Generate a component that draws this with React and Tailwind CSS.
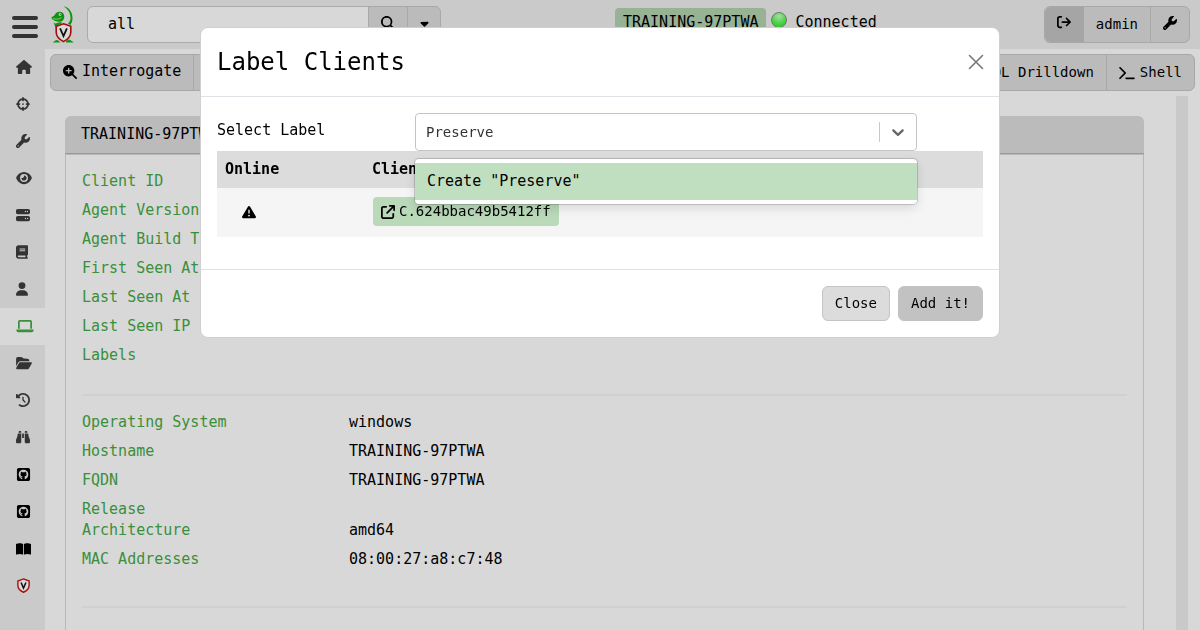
import { useState } from 'react'
import {
    FaBinoculars,
    FaBook,
    FaBookOpen,
    FaCaretDown,
    FaClockRotateLeft,
    FaCrosshairs,
    FaEye,
    FaFolderOpen,
    FaHouse,
    FaLaptop,
    FaMagnifyingGlass,
    FaMagnifyingGlassPlus,
    FaServer,
    FaSquareGithub,
    FaTriangleExclamation,
    FaUser,
    FaWrench,
    FaArrowRightFromBracket,
    FaArrowUpRightFromSquare,
    FaTerminal,
} from 'react-icons/fa6'

const NAV = [
    { name: 'Home', icon: FaHouse, size: 'w-4 h-[14px]' },
    { name: 'Hunt Manager', icon: FaCrosshairs, size: 'w-[14px] h-[14px]' },
    { name: 'View Artifacts', icon: FaWrench, size: 'w-[14px] h-[14px]' },
    { name: 'Server Events', icon: FaEye, size: 'w-4 h-[14px]' },
    { name: 'Server Artifacts', icon: FaServer, size: 'w-[14px] h-[14px]' },
    { name: 'Notebooks', icon: FaBook, size: 'w-3 h-[14px]' },
    { name: 'Users', icon: FaUser, size: 'w-3 h-[14px]' },
    { name: 'Host Information', icon: FaLaptop, size: 'w-[18px] h-[14px]', active: true },
    { name: 'Virtual Filesystem', icon: FaFolderOpen, size: 'w-4 h-[14px]' },
    { name: 'Collected Artifacts', icon: FaClockRotateLeft, size: 'w-[14px] h-[14px]' },
    { name: 'Client Events', icon: FaBinoculars, size: 'w-[14px] h-[14px]' },
    { name: 'GitHub', icon: FaSquareGithub, size: 'w-[15px] h-[15px]', external: true },
    { name: 'GitHub Issues', icon: FaSquareGithub, size: 'w-[15px] h-[15px]', external: true },
    { name: 'Documentation', icon: FaBookOpen, size: 'w-[15px] h-[14px]', external: true },
    { name: 'Velociraptor', icon: Shield, size: 'w-[15px] h-[15px]', external: true },
]

const CLIENT_ROWS = [
    ['Client ID', ''],
    ['Agent Version', ''],
    ['Agent Build Time', ''],
    ['First Seen At', ''],
    ['Last Seen At', ''],
    ['Last Seen IP', ''],
    ['Labels', ''],
]

const SYSTEM_ROWS = [
    ['Operating System', 'windows'],
    ['Hostname', 'TRAINING-97PTWA'],
    ['FQDN', 'TRAINING-97PTWA'],
    ['Release', '', 'mb-0'],
    ['Architecture', 'amd64'],
    ['MAC Addresses', '08:00:27:a8:c7:48'],
]

function Shield({ className = '' }) {
    return (
        <svg viewBox="0 0 14 16" className={className} aria-hidden="true">
            <path
                d="M7 1 13 3.2V8c0 3.2-2.4 5.6-6 7.2C3.4 13.6 1 11.2 1 8V3.2Z"
                fill="#dadada"
                stroke="#a80f0f"
                strokeWidth="1.5"
            />
            <path d="m4.400 4.800 2.600 6 2.600-6" fill="none" stroke="#111" strokeWidth="1.600" />
        </svg>
    )
}

function Logo() {
    return (
        <svg viewBox="0 0 26 38" className="h-[38px] w-[26px] shrink-0" aria-label="Velociraptor" role="img">
            <g fill="#0b970b">
                {/* tail */}
                <path d="M13.500 0.600c5 0 9 5.400 9 11.400 0 3-.8 5.200-2.200 7l-2.300-1.300c2-2.200 2.700-4 2.500-6.700C20.200 6.500 17.500 2.400 13.500 .6Z" />
                {/* head and jaw */}
                <path d="M1.200 11.500c1-.8 2.800-1.200 3.600-2.700C5.800 6.600 7.500 5.600 10 5.700c2.800.2 4.300 2.200 4.300 4.800 0 2.800-1.500 5-4 5.200-3.600.3-7.500-1-9.100-4.200Z" />
                <path d="M3.500 16.800c2 1.200 3.500.3 5 -.3l3-.6v1.600l-4.500 2-1.500 2.200-.8-2.400Z" />
                {/* feet */}
                <path d="M3 36.500c1.200-1.600 2.600-2.300 4.500-2.600l3 2.600H3Zm13-1.600 3-1.400c1.600.8 3.200 1.400 4.700 3H16Z" />
            </g>
            <path d="M3 12.600c3 .9 6 .6 8.500-.8" fill="none" stroke="#cacaca" strokeWidth="0.700" />
            <circle cx="10" cy="8.500" r="1.300" fill="#eee" />
            <circle cx="10.200" cy="8.500" r="0.600" fill="#111" />
            <path
                d="M13.500 17.800 20.800 20.300v5.700c0 4.200-2.900 7.400-7.300 9.600-4.400-2.200-7.300-5.400-7.300-9.600v-5.700Z"
                fill="#d8d8d8"
                stroke="#a50d0d"
                strokeWidth="1.600"
            />
            <path d="m10.100 22.300 3.400 7.700 3.400-7.700" fill="none" stroke="#111" strokeWidth="1.800" />
        </svg>
    )
}

function Header() {
    const [query, setQuery] = useState('all')
    return (
        <header className="flex shrink-0 items-center bg-[#cacaca] py-[6px] pr-[10px] pl-3">
            <button type="button" aria-label="Menu" className="flex w-[26px] flex-col gap-[5px] pt-1">
                <span className="h-1 w-full rounded-full bg-[#333]" />
                <span className="h-1 w-full rounded-full bg-[#333]" />
                <span className="h-1 w-full rounded-full bg-[#333]" />
            </button>
            <a href="#home" className="-my-1 ml-3">
                <Logo />
            </a>
            <form className="ml-[11px] flex" onSubmit={(e) => e.preventDefault()}>
                <input
                    type="text"
                    aria-label="Search clients"
                    value={query}
                    onChange={(e) => setQuery(e.target.value)}
                    className="w-[282px] rounded-l-md border border-[#ababab] bg-[#d8d8d8] px-5 py-[7px] leading-[21px]"
                />
                <button
                    type="submit"
                    aria-label="Search"
                    className="-ml-px flex w-10 items-center justify-center border border-[#a8a8a8] bg-[#bbb] pb-[3px]"
                >
                    <FaMagnifyingGlass className="h-[14px] w-[14px]" />
                </button>
                <button
                    type="button"
                    aria-label="Search options"
                    className="-ml-px flex w-[34px] items-center justify-center rounded-r-md border border-[#a8a8a8] bg-[#bbb] pb-[3px]"
                >
                    <FaCaretDown className="h-[13px] w-[13px]" />
                </button>
            </form>
            <div className="ml-[174px] flex items-start gap-[5px] pb-1">
                <a href="#client" className="rounded bg-[#98b296] px-2 py-1 leading-[21px]">
                    TRAINING-97PTWA
                </a>
                <span className="mt-1 h-4 w-4 rounded-full border border-[#6d7a6d] bg-[radial-gradient(circle_at_50%_25%,#a8dca4,#35cf30_70%)]" />
                <span className="ml-[3px] py-1 leading-[21px]">Connected</span>
            </div>
            <div className="ml-auto flex rounded-md border border-[#a8a8a8] bg-[#bbb] text-sm">
                <button type="button" aria-label="Log out" className="flex w-[39px] justify-center rounded-l-md bg-[#a5a5a5] pt-2">
                    <FaArrowRightFromBracket className="h-[14px] w-[14px]" />
                </button>
                <button type="button" className="px-3 py-[7px] leading-[21px]">
                    admin
                </button>
                <button
                    type="button"
                    aria-label="Settings"
                    className="flex w-[39px] items-center justify-center border-l border-[#a8a8a8] pb-[3px]"
                >
                    <FaWrench className="h-[14px] w-[14px]" />
                </button>
            </div>
        </header>
    )
}

function Sidebar() {
    return (
        <nav className="flex w-[45px] shrink-0 flex-col bg-[#cacaca]">
            {NAV.map(({ name, icon: Icon, size, active, external }) => (
                <a
                    key={name}
                    href="#nav"
                    aria-label={name}
                    className={`flex h-[37px] shrink-0 items-center pl-4 ${
                        active ? 'bg-[#d8d8d8] pb-[2px] text-[#3a8f3a]' : external ? 'text-black' : 'pb-[2px] text-[#333]'
                    }`}
                >
                    <Icon className={size} />
                </a>
            ))}
        </nav>
    )
}

function Toolbar() {
    return (
        <div className="flex shrink-0 justify-between">
            <div className="flex divide-x divide-[#a8a8a8] rounded-l-md border border-[#a8a8a8] bg-[#bbb]">
                <button type="button" className="flex items-center gap-[5px] px-3 pt-[6px] pb-2 leading-[21px]">
                    <FaMagnifyingGlassPlus className="h-[14px] w-[14px]" />
                    Interrogate
                </button>
                <button type="button" aria-label="Virtual filesystem" className="px-3">
                    <FaFolderOpen className="h-[14px] w-4" />
                </button>
            </div>
            <div className="flex divide-x divide-[#a8a8a8] rounded-r-md border border-[#a8a8a8] bg-[#bbb] text-sm">
                <button type="button" className="px-3 py-[7px] leading-[21px]">
                    VQL Drilldown
                </button>
                <button type="button" className="flex items-center gap-[5px] px-3 py-[7px] leading-[21px]">
                    <FaTerminal className="h-[14px] w-4" />
                    Shell
                </button>
            </div>
        </div>
    )
}

function InfoList({ rows }) {
    return (
        <dl>
            {rows.map(([label, value, margin = 'mb-2']) => (
                <div key={label} className={`grid grid-cols-[267px_1fr] leading-[21px] ${margin}`}>
                    <dt className="text-[#3a8f3a]">{label}</dt>
                    <dd>{value}</dd>
                </div>
            ))}
        </dl>
    )
}

function ClientCard() {
    return (
        <section className="flex flex-1 flex-col">
            <h1 className="rounded-t-md border-b border-[#999] bg-[#bbb] px-4 py-2 leading-[21px]">
                TRAINING-97PTWA
            </h1>
            <div className="flex-1 border-x border-t border-[#b8b8b8] px-4 pt-4">
                <InfoList rows={CLIENT_ROWS} />
                <hr className="mt-7 mb-4 border-t-2 border-[#d0d0d0]" />
                <InfoList rows={SYSTEM_ROWS} />
                <hr className="mt-9 mb-4 border-t-2 border-[#d0d0d0]" />
            </div>
        </section>
    )
}

function LabelSelect() {
    const [value, setValue] = useState('Preserve')
    return (
        <div className="relative flex w-[502px] items-center rounded border border-[#c4c4c4] bg-white">
            <input
                id="label-select"
                type="text"
                role="combobox"
                aria-expanded="true"
                aria-controls="label-options"
                value={value}
                onChange={(e) => setValue(e.target.value)}
                className="min-w-0 flex-1 px-[10px] py-2 text-sm leading-5 text-[#333] outline-none"
            />
            <span className="h-5 w-px bg-[#c8c8c8]" />
            <button type="button" aria-label="Show labels" className="px-2">
                <svg viewBox="0 0 20 20" className="h-5 w-5 fill-[#666]" aria-hidden="true">
                    <path d="M4.516 7.548c0.436-0.446 1.043-0.481 1.576 0l3.908 3.747 3.908-3.747c0.533-0.481 1.141-0.446 1.574 0 0.436 0.445 0.408 1.197 0 1.615-0.406 0.418-4.695 4.502-4.695 4.502-0.217 0.223-0.502 0.335-0.787 0.335s-0.57-0.112-0.789-0.335c0 0-4.287-4.084-4.695-4.502s-0.436-1.170 0-1.615z" />
                </svg>
            </button>
            <ul
                id="label-options"
                role="listbox"
                className="absolute top-full -right-px -left-px z-10 mt-[9px] rounded bg-white py-1 shadow-[0_0_0_1px_rgba(0,0,0,0.16),0_4px_11px_rgba(0,0,0,0.12)]"
            >
                <li role="option" aria-selected="true" className="bg-[#c0dfc0] px-3 py-2 leading-[21px]">
                    Create &quot;{value}&quot;
                </li>
            </ul>
        </div>
    )
}

function LabelDialog() {
    return (
        <div className="fixed inset-0 z-20 flex items-start justify-center pt-[27px]">
            <div
                role="dialog"
                aria-modal="true"
                aria-labelledby="dialog-title"
                className="w-full max-w-[800px] rounded-lg border border-[#cfcfcf] bg-white"
            >
                <div className="flex items-center justify-between border-b border-[#dee2e6] py-4 pr-[15px] pl-4">
                    <h2 id="dialog-title" className="text-2xl leading-9">
                        Label Clients
                    </h2>
                    <button type="button" aria-label="Close dialog">
                        <svg viewBox="0 0 16 16" className="h-4 w-4 stroke-[#777]" aria-hidden="true">
                            <path d="m1.500 1.500 13 13m0-13-13 13" strokeWidth="1.600" strokeLinecap="round" />
                        </svg>
                    </button>
                </div>
                <div className="px-4 pt-4 pb-8">
                    <div className="flex items-start">
                        <label htmlFor="label-select" className="w-[198px] shrink-0 pt-[7px] leading-[21px]">
                            Select Label
                        </label>
                        <LabelSelect />
                    </div>
                    <table className="w-full text-left">
                        <thead>
                            <tr className="bg-[#dcdcdc]">
                                <th className="w-[147px] px-2 py-2 leading-[21px] font-bold">Online</th>
                                <th className="px-2 py-2 leading-[21px] font-bold">Client ID</th>
                            </tr>
                        </thead>
                        <tbody>
                            <tr className="bg-[#f5f5f5]">
                                <td className="pt-2 pb-[10px] pl-[25px]">
                                    <FaTriangleExclamation className="h-[14px] w-[14px]" aria-label="Offline" />
                                </td>
                                <td className="pt-[9px] pb-[11px] pl-[9px]">
                                    <a
                                        href="#client"
                                        className="inline-flex items-center gap-1 rounded bg-[#b9d9b9] px-2 py-1 align-top text-sm leading-[21px]"
                                    >
                                        <FaArrowUpRightFromSquare className="h-[14px] w-[14px]" />
                                        C.624bbac49b5412ff
                                    </a>
                                </td>
                            </tr>
                        </tbody>
                    </table>
                </div>
                <div className="flex justify-end gap-2 border-t border-[#dee2e6] p-4 text-sm">
                    <button type="button" className="rounded-md border border-[#c4c4c4] bg-[#dcdcdc] px-3 py-[6px] leading-[21px]">
                        Close
                    </button>
                    <button type="button" className="rounded-md border border-[#c2c2c2] bg-[#c2c2c2] px-3 py-[6px] leading-[21px]">
                        Add it!
                    </button>
                </div>
            </div>
        </div>
    )
}

export default function App() {
    return (
        <div className="flex h-screen flex-col overflow-hidden bg-[#d8d8d8] font-['DejaVu_Sans_Mono',monospace] text-[15px] text-black">
            <Header />
            <div className="flex min-h-0 flex-1">
                <Sidebar />
                <main className="flex min-w-0 flex-1 flex-col px-[5px] pt-[5px]">
                    <Toolbar />
                    <div className="mt-[5px] flex min-h-0 flex-1 pr-[7px]">
                        <div className="flex flex-1 pt-5 pr-8 pl-[15px]">
                            <ClientCard />
                        </div>
                        <div className="w-3 bg-[#c9c9c9]" />
                    </div>
                </main>
            </div>
            <LabelDialog />
        </div>
    )
}
